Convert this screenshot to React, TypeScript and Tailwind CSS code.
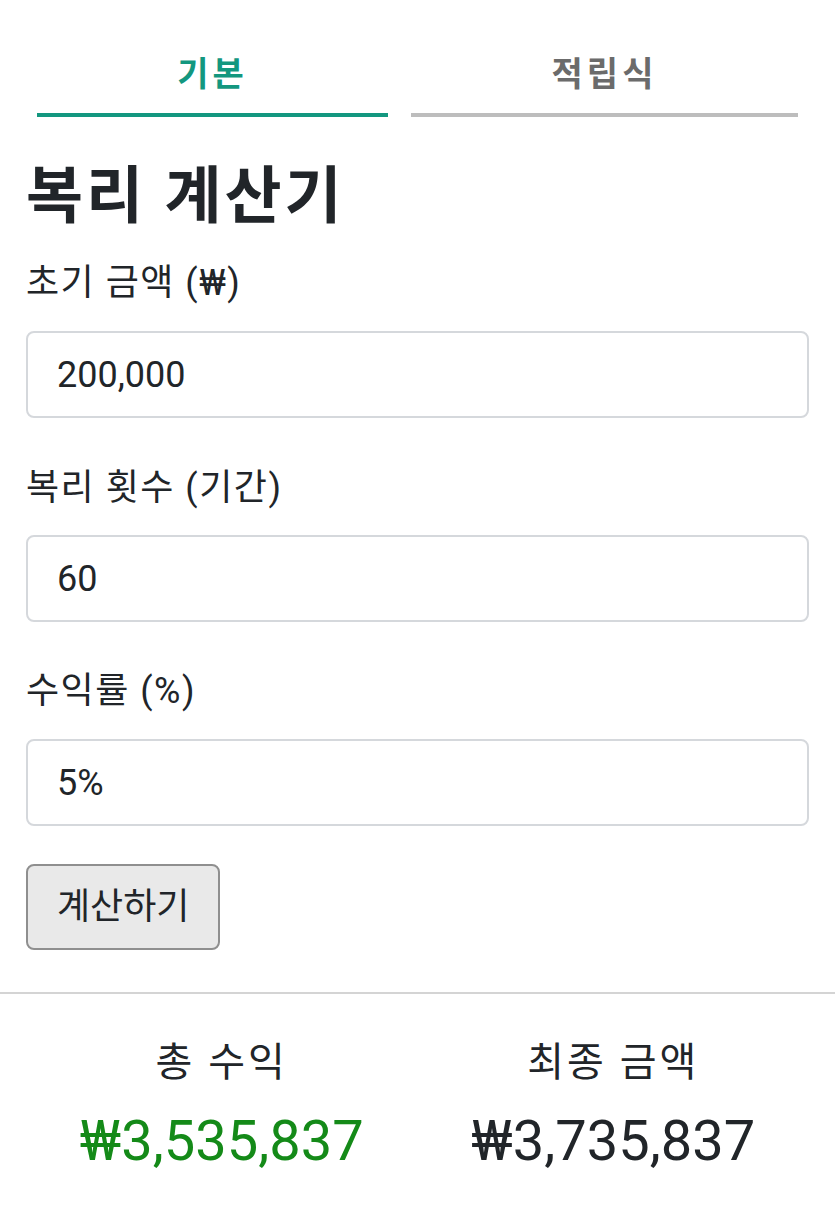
import React from "react";

const font = { fontFamily: 'Roboto, "Noto Sans CJK KR", sans-serif' };

function Field({ label, value, labelMt, inputMt }: { label: string; value: string; labelMt: string; inputMt: string }) {
  return (
    <div>
      <div className={`${labelMt} text-[36px] leading-[44px] tracking-[1.5px] text-[#212529]`}>{label}</div>
      <div className={`${inputMt} h-[87px] rounded-[8px] border-2 border-[#d5d8dc] bg-white flex items-center pl-[29px] text-[36px] text-[#212529]`}>
        {value}
      </div>
    </div>
  );
}

export default function App() {
  return (
    <div className="w-[835px] min-h-[1217px] bg-white" style={font}>
      <div className="flex gap-[23px] px-[37px]">
        <div className="w-[351px] pt-[50px] pb-[15px] border-b-4 border-[#13977f] text-center text-[34px] leading-[48px] font-semibold tracking-[4px] text-[#13977f]">
          기본
        </div>
        <div className="w-[387px] pt-[50px] pb-[15px] border-b-4 border-[#bdbdbd] text-center text-[34px] leading-[48px] font-semibold tracking-[4px] text-[#6b6b6b]">
          적립식
        </div>
      </div>
      <div className="px-[26px]">
        <h1 className="mt-[44px] text-[62px] leading-[72px] font-bold tracking-[3px] text-[#212529]">복리 계산기</h1>
        <Field label="초기 금액 (₩)" value="200,000" labelMt="mt-[28px]" inputMt="mt-[26px]" />
        <Field label="복리 횟수 (기간)" value="60" labelMt="mt-[48px]" inputMt="mt-[25px]" />
        <Field label="수익률 (%)" value="5%" labelMt="mt-[47px]" inputMt="mt-[26px]" />
        <button className="mt-[38px] h-[86px] px-[29px] rounded-[8px] border-2 border-[#8f8f8f] bg-[#e9e9e9] text-[36px] text-[#212529]">
          계산하기
        </button>
      </div>
      <div className="mt-[42px] h-[2px] bg-[#d4d4d4]" />
      <div className="px-[26px] grid grid-cols-2 mt-[45px]">
        <div className="text-center">
          <div className="text-[40px] leading-[48px] tracking-[3px] text-[#212529]">총 수익</div>
          <div className="mt-[22px] text-[56px] leading-[64px] text-[#148a18]">₩3,535,837</div>
        </div>
        <div className="text-center">
          <div className="text-[40px] leading-[48px] tracking-[3px] text-[#212529]">최종 금액</div>
          <div className="mt-[22px] text-[56px] leading-[64px] text-[#212529]">₩3,735,837</div>
        </div>
      </div>
    </div>
  );
}
